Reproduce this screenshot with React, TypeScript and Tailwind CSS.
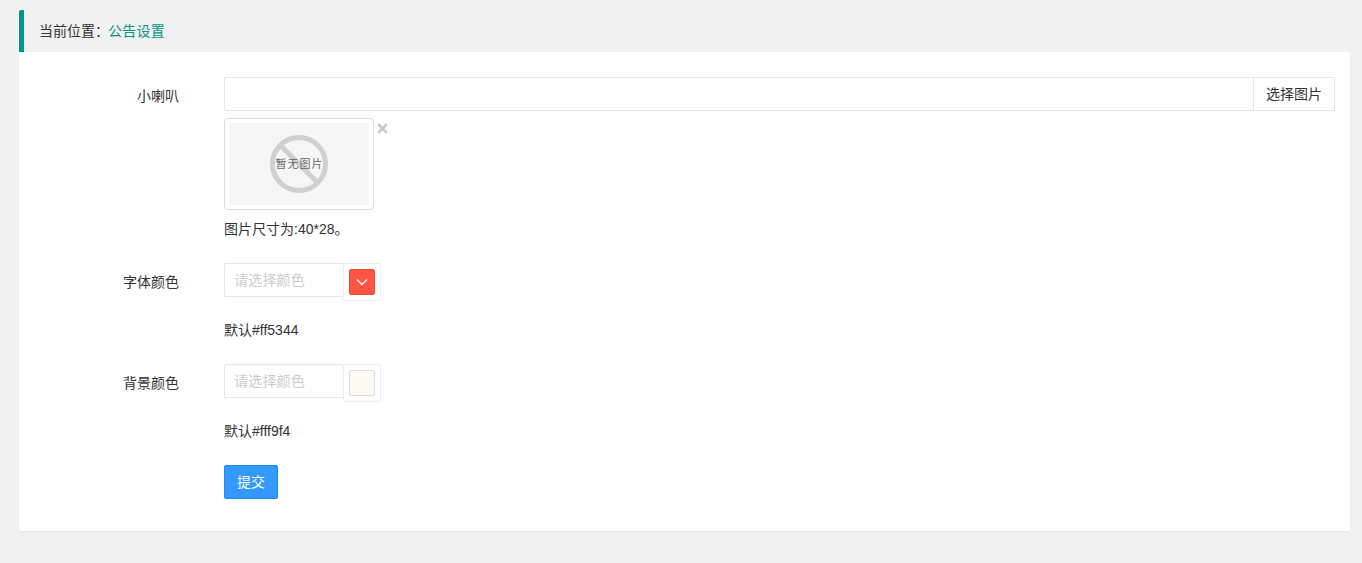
import React from 'react';

const FONT = 'font-["Liberation_Sans","Noto_Sans_CJK_SC",sans-serif]';

const NoImage: React.FC = () => (
  <div className="relative flex h-[82px] w-[140px] items-center justify-center bg-[#f6f6f6]">
    <svg width="60" height="60" viewBox="0 0 60 60" fill="none" className="absolute">
      <circle cx="30" cy="30" r="26.5" stroke="#d0d0d0" strokeWidth="5" />
      <path d="M11 11 L49 49" stroke="#d0d0d0" strokeWidth="5" />
    </svg>
    <span className="relative mt-[1px] ml-[1px] text-[11px] leading-none tracking-[1px] text-[#666]">暂无图片</span>
  </div>
);

const ColorRow: React.FC<{ label: string; color: string; hint: string; border: string }> = ({
  label,
  color,
  hint,
  border,
}) => (
  <div className="flex">
    <label className="w-[160px] pt-[9px] text-right text-[14px] leading-[20px] text-[#333]">{label}</label>
    <div className="ml-[45px]">
      <div className="flex items-start">
        <div className="flex h-[34px] w-[120px] items-center rounded-[2px] border border-[#e6e6e6] bg-white pl-[9px] text-[14px] tracking-[0.2px] text-[#ccc]">
          请选择颜色
        </div>
        <div className="ml-[-1px] flex h-[38px] w-[38px] items-center justify-center rounded-[2px] border border-[#eeeeee] bg-white">
          <div
            className={`flex h-[26px] w-[26px] items-center justify-center rounded-[2px] border ${border} ${color}`}
          >
            <svg width="12" height="12" viewBox="0 0 12 12" fill="none">
              <path d="M1 3.5 L6 8.5 L11 3.5" stroke="#ffffff" strokeWidth="1.3" />
            </svg>
          </div>
        </div>
      </div>
      <p className="mt-[19px] text-[14px] leading-[20px] text-[#333]">{hint}</p>
    </div>
  </div>
);

export default function App() {
  return (
    <div className={`min-h-[563px] bg-[#f1f1f1] pt-[10px] pr-[12px] pb-[32px] pl-[19px] ${FONT}`}>
      {/* Breadcrumb */}
      <div className="flex h-[42px] items-center rounded-tl-[2px] border-l-[5px] border-[#009688] pl-[15px] text-[14px]">
        <span className="text-[#333]">当前位置：</span>
        <span className="ml-[-1px] tracking-[0.25px] text-[#009688]">公告设置</span>
      </div>

      {/* Form */}
      <div className="h-[479px] rounded-b-[2px] bg-white pt-[25px] pr-[15px] shadow-[0_1px_2px_rgba(0,0,0,0.05)]">
        <div className="flex">
          <label className="w-[160px] pt-[9px] text-right text-[14px] leading-[20px] text-[#333]">小喇叭</label>
          <div className="ml-[45px] flex-1">
            <div className="flex h-[34px]">
              <div className="flex-1 border border-[#e6e6e6] bg-white" />
              <button className="ml-[-1px] w-[82px] border border-[#e6e6e6] bg-white text-[14px] text-[#333]">
                选择图片
              </button>
            </div>
            <div className="mt-[7px] flex items-start">
              <div className="rounded-[4px] border border-[#ddd] p-[4px]">
                <NoImage />
              </div>
              <svg width="11" height="11" viewBox="0 0 11 11" className="mt-[5px] ml-[3px]" fill="none">
                <path d="M1.2 1.2 L9.8 9.8 M9.8 1.2 L1.2 9.8" stroke="#c8c8c8" strokeWidth="2.6" />
              </svg>
            </div>
            <p className="mt-[9px] text-[14px] leading-[20px] text-[#333]">图片尺寸为:40*28。</p>
          </div>
        </div>

        <div className="mt-[24px]">
          <ColorRow label="字体颜色" color="bg-[#ff5344]" hint="默认#ff5344" border="border-[#f04a3c]" />
        </div>
        <div className="mt-[24px]">
          <ColorRow label="背景颜色" color="bg-[#fff9f4]" hint="默认#fff9f4" border="border-[#dddddd]" />
        </div>

        <button className="mt-[24px] ml-[205px] h-[34px] w-[54px] rounded-[2px] border border-[#1e88f0] bg-[#3399ff] text-[14px] text-white">
          提交
        </button>
      </div>
    </div>
  );
}
